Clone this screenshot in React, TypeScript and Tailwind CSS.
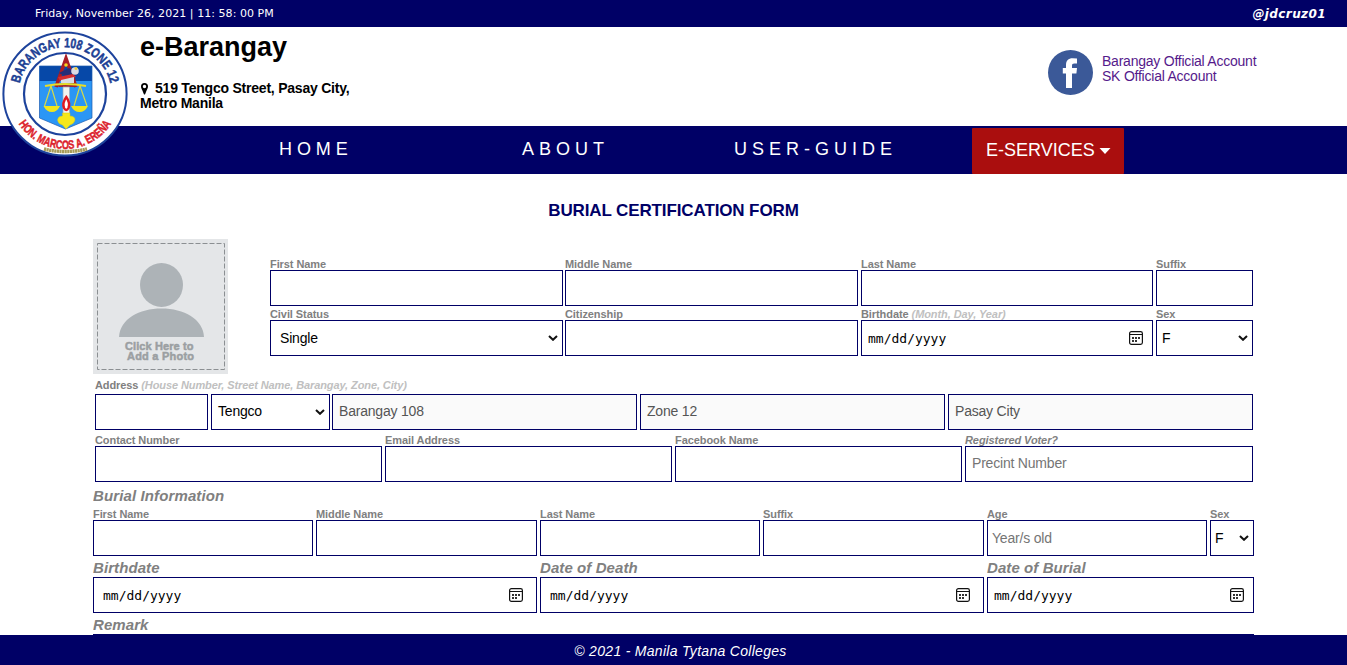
import type { ReactNode } from "react";

function Seal() {
  return (
    <svg viewBox="0 0 126 126" className="block h-[126px] w-[126px]">
      <defs>
        <path id="seal-top" d="M16.4 63 A46.6 46.6 0 0 1 109.6 63" />
        <path id="seal-bottom" d="M8 63 A55 55 0 0 0 118 63" />
      </defs>
      <circle cx="63" cy="63" r="61.6" fill="#fff" stroke="#1d439c" strokeWidth="2" />
      <circle cx="63" cy="63" r="41" fill="#fff" stroke="#1d439c" strokeWidth="2.2" />
      <path d="M37.500 35 H90 V87 L63.500 98 L37.500 87 Z" fill="#2b96f5" />
      <path d="M37.500 35 H90 V50 H37.500 Z" fill="#0648a8" />
      <path d="M37.500 35 H90 V87 L63.500 98 L37.500 87 Z" fill="none" stroke="#1c5bb0" strokeWidth="0.7" />
      <path d="M54 56 L64 27.500 L74 56" fill="none" stroke="#a91d27" strokeWidth="3.600" />
      <circle cx="64" cy="34" r="1.800" fill="#f5d51d" />
      <path d="M57 42 L67 37 L76 44 L64 46 Z" fill="#252e78" />
      <path d="M56 46 L71 43 L74 46 L58 50 Z" fill="#d52c2e" />
      <path d="M59 49 L72 46 V52 H59 Z" fill="#d8dbe5" />
      <circle cx="73" cy="40" r="3.8" fill="#d8dbe5" />
      <circle cx="74" cy="37.5" r="1.5" fill="#eccb40" />
      <path d="M54 54 L74 52 L72 56 H57 Z" fill="#9e2430" />
      <path d="M43 55 Q63 51 84 55" fill="none" stroke="#e9dc26" strokeWidth="1.8" />
      <path d="M49 55 L42.500 75 M49 55 L55 75 M78 55 L72 75 M78 55 L85 75" stroke="#d3d94b" strokeWidth="1.2" />
      <path d="M41.500 75 H58 Q55 81 50 81 Q44.500 81 41.500 75 Z M69 75 H86 Q83 81 77.500 81 Q72 81 69 75 Z" fill="#f1e51c" />
      <path d="M61 56 H67.500 V83 H61 Z" fill="#f2f3ee" stroke="#9caab8" strokeWidth="0.7" />
      <path d="M64.300 66 Q68.500 72 66.500 77 Q64.300 81 62 77 Q60 72 64.300 66 Z" fill="#fff" stroke="#e01820" strokeWidth="2.4" />
      <path d="M60.500 82 H68 V85 Q73 85 73 89 Q72 93 68 94 L64 98 L60.500 94 Q56 93 55.500 89 Q56 85 60.500 85 Z" fill="#f5e71b" stroke="#d3c818" strokeWidth="0.5" />
      <text fill="#1c3f94" stroke="#1c3f94" strokeWidth="0.5" fontFamily="Liberation Sans, sans-serif" fontWeight="700" fontSize="13.500">
        <textPath href="#seal-top" startOffset="50%" textAnchor="middle" textLength="125" lengthAdjust="spacingAndGlyphs">BARANGAY 108 ZONE 12</textPath>
      </text>
      <text fill="#dc1f2c" stroke="#dc1f2c" strokeWidth="0.5" fontFamily="Liberation Sans, sans-serif" fontWeight="700" fontSize="12">
        <textPath href="#seal-bottom" startOffset="50%" textAnchor="middle" textLength="110" lengthAdjust="spacingAndGlyphs">HON. MARCOS A. EREÑA</textPath>
      </text>
      <path d="M42 118 Q63 123 85 118" fill="none" stroke="#a79b58" strokeWidth="3.400" strokeDasharray="2.200 0.400" />
    </svg>
  );
}

function CalendarIcon() {
  return (
    <svg viewBox="0 0 14 14" className="-mt-[1px] block h-[14px] w-[14px]">
      <rect x="0.6" y="0.6" width="12.8" height="12.8" rx="1.800" fill="none" stroke="#111" strokeWidth="1.2" />
      <path d="M1 3.500 H13" stroke="#111" />
      <path d="M6 6h2v2h-2z M9 6h2v2h-2z M3 6h2v2h-2z M3 9h2v2h-2z M6 9h2v2h-2z" fill="#333" />
    </svg>
  );
}

function Chevron() {
  return (
    <svg viewBox="0 0 10 6" className="block h-[6px] w-[10px]">
      <path d="M1 1 L5 4.800 L9 1" fill="none" stroke="#111" strokeWidth="2" />
    </svg>
  );
}

function Avatar() {
  return (
    <svg viewBox="0 0 135 135" className="block h-[135px] w-[135px]">
      <rect width="135" height="135" fill="#e4e6e8" />
      <rect x="4.500" y="4.500" width="127" height="126" fill="none" stroke="#8b8f92" strokeDasharray="5 2" />
      <ellipse cx="68.500" cy="46" rx="21.500" ry="22" fill="#adb3b7" />
      <path d="M26 98 C27 80 46 69.500 68.500 69.500 C91 69.500 110 80 111 98 Z" fill="#adb3b7" />
      <g fill="#9b9fa2" stroke="#9b9fa2" strokeWidth="0.5" fontFamily="Liberation Sans, sans-serif" fontWeight="700" fontSize="11">
        <text x="32" y="111" textLength="68.500">Click Here to</text>
        <text x="34" y="121" textLength="67">Add a Photo</text>
      </g>
    </svg>
  );
}

type FieldProps = {
  label?: string;
  hint?: string;
  italic?: boolean;
  gap?: "pr-0" | "pr-[2px]" | "pr-[3px]";
  pad?: string;
  tone?: string;
  value?: string;
  kind?: "text" | "select" | "date";
  end?: string;
  big?: boolean;
};

function Field({ label, hint, italic, gap = "pr-[3px]", pad = "pl-[6px]", tone = "text-black", value, kind = "text", end = "pr-[5px]", big }: FieldProps) {
  return (
    <div className={`flex flex-col ${gap}`}>
      {label && (
        <label
          className={
            big
              ? "h-[21px] text-[15px] leading-[23px] font-bold tracking-[0.08px] italic text-[#808080]"
              : `h-[14px] text-[11px] leading-[16px] font-bold tracking-[-0.08px] whitespace-nowrap text-[#808080] ${italic ? "italic" : ""}`
          }
        >
          {label}
          {hint && <i className="text-[#c0c0c0]"> {hint}</i>}
        </label>
      )}
      <div
        className={`flex h-9 items-center justify-between border border-[#000066] ${pad} ${end} ${tone} ${
          kind === "date" ? "font-['DejaVu_Sans_Mono',monospace] text-[13px]" : "text-[14px] tracking-[-0.2px]"
        }`}
      >
        <span className={`whitespace-nowrap ${kind === "text" ? "-mt-[2px]" : kind === "date" ? "mt-[1px]" : ""}`}>{value}</span>
        {kind === "select" && <Chevron />}
        {kind === "date" && <CalendarIcon />}
      </div>
    </div>
  );
}

function Heading({ children }: { children: ReactNode }) {
  return <h3 className="text-[15px] font-bold tracking-[0.12px] italic text-[#808080]">{children}</h3>;
}

export default function App() {
  return (
    <div className="flex h-[665px] w-[1347px] flex-col overflow-hidden bg-white font-['Liberation_Sans',Arial,sans-serif] text-black">
      <div className="flex h-[27px] shrink-0 justify-between bg-[#000066] pr-[21px] pl-[35px] font-['DejaVu_Sans',Verdana,sans-serif] text-white">
        <span className="text-[11px] leading-[27px] tracking-[0.05px]">Friday, November 26, 2021 | 11: 58: 00 PM</span>
        <span className="text-[12px] leading-[29px] font-bold tracking-[0.4px] italic">@jdcruz01</span>
      </div>

      <header className="relative flex h-[99px] shrink-0">
        <div className="absolute top-[4px] left-[2px] z-10">
          <Seal />
        </div>
        <div className="ml-[140px] w-[230px]">
          <h1 className="mt-[4px] text-[27px] leading-[32px] font-bold">e-Barangay</h1>
          <p className="mt-[18px] text-[14px] leading-[15px] font-bold tracking-[-0.22px] whitespace-nowrap">
            <svg viewBox="0 0 7 12" className="mr-[7px] ml-[1px] inline h-[12px] w-[7px] align-[-2px]">
              <path
                fillRule="evenodd"
                d="M3.500 0 A3.500 3.500 0 0 1 7 3.500 C7 5 6.200 6 5.600 7.400 L4.100 11.200 Q3.500 12 2.900 11.200 L1.400 7.400 C0.800 6 0 5 0 3.500 A3.500 3.500 0 0 1 3.500 0 Z M3.500 1.800 A1.700 1.700 0 1 0 3.500 5.200 A1.700 1.700 0 1 0 3.500 1.800 Z"
              />
            </svg>
            519 Tengco Street, Pasay City,
            <br />
            Metro Manila
          </p>
        </div>
        <div className="mt-[23px] ml-[678px] flex">
          <svg viewBox="0 0 45 45" className="block h-[45px] w-[45px]">
            <circle cx="22.500" cy="22.500" r="22.500" fill="#3b5998" />
            <path
              d="M18 38 V23.500 H14.800 V18 H18 V15.200 C18 10.500 20.300 8.300 24.600 8.300 L29 8.500 V13.500 H26.300 C24.600 13.500 24 14.300 24 15.800 V18 H29 L28.400 23.500 H24 V38 Z"
              fill="#fff"
            />
          </svg>
          <div className="mt-[4px] ml-[9px] text-[14px] leading-[15px] tracking-[-0.23px] whitespace-nowrap text-[#551a8b]">
            Barangay Official Account
            <br />
            SK Official Account
          </div>
        </div>
      </header>

      <nav className="flex h-[48px] shrink-0 bg-[#000066] text-[18px] leading-[46px] text-white">
        <span className="ml-[279px] w-[243px] tracking-[4.9px]">HOME</span>
        <span className="w-[212px] tracking-[5px]">ABOUT</span>
        <span className="w-[238px] tracking-[5px]">USER-GUIDE</span>
        <span className="mt-[2px] flex h-[46px] w-[152px] items-center rounded-[1px] bg-[#aa0e0e] pb-[2px] pl-[14px] text-[18px] leading-[44px]">
          E-SERVICES
          <svg viewBox="0 0 12 6" className="mt-[2px] ml-[4px] block h-[6px] w-[12px]">
            <path d="M0.500 0 H11.500 L6 6 Z" fill="#fff" />
          </svg>
        </span>
      </nav>

      <main className="ml-[93px] flex w-[1161px] grow flex-col overflow-hidden">
        <h2 className="mt-[27px] text-center text-[17px] leading-[20px] font-bold tracking-[-0.12px] text-[#000066]">BURIAL CERTIFICATION FORM</h2>
        <div className="mt-[18px] flex h-[139px] shrink-0">
          <Avatar />
          <div className="mt-[17px] ml-[42px]">
            <div className="grid grid-cols-[295px_296px_295px_97px]">
              <Field label="First Name" gap="pr-[2px]" />
              <Field label="Middle Name" />
              <Field label="Last Name" />
              <Field label="Suffix" gap="pr-0" />
            </div>
            <div className="grid grid-cols-[295px_296px_295px_97px]">
              <Field label="Civil Status" gap="pr-[2px]" kind="select" value="Single" pad="pl-[9px]" end="pr-[4px]" />
              <Field label="Citizenship" />
              <Field label="Birthdate" hint="(Month, Day, Year)" kind="date" value="mm/dd/yyyy" end="pr-[9px]" />
              <Field label="Sex" gap="pr-0" kind="select" value="F" pad="pl-[5px]" end="pr-[4px]" />
            </div>
          </div>
        </div>

        <div className="ml-[2px]">
          <p className="h-[16px] text-[11px] leading-[15px] font-bold tracking-[-0.1px] text-[#808080]">
            Address <i className="text-[#c0c0c0]">(House Number, Street Name, Barangay, Zone, City)</i>
          </p>
          <div className="grid grid-cols-[116px_121px_308px_308px_305px]">
            <Field />
            <Field gap="pr-[2px]" kind="select" value="Tengco" end="pr-[4px] pb-[1px]" />
            <Field value="Barangay 108" tone="bg-[#fafafa] text-[#555]" />
            <Field value="Zone 12" tone="bg-[#fafafa] text-[#555]" />
            <Field value="Pasay City" tone="bg-[#fafafa] text-[#555]" gap="pr-0" />
          </div>
          <div className="mt-[2px] grid grid-cols-[290px_290px_290px_288px]">
            <Field label="Contact Number" />
            <Field label="Email Address" />
            <Field label="Facebook Name" />
            <Field label="Registered Voter?" italic value="Precint Number" tone="text-[#757575]" gap="pr-0" />
          </div>
        </div>

        <div className="h-[24px] shrink-0 leading-[27px]">
          <Heading>Burial Information</Heading>
        </div>
        <div className="grid grid-cols-[223px_224px_223px_224px_223px_44px]">
          <Field label="First Name" />
          <Field label="Middle Name" />
          <Field label="Last Name" />
          <Field label="Suffix" />
          <Field label="Age" value="Year/s old" tone="text-[#757575]" pad="pl-[4px] pt-[2px]" />
          <Field label="Sex" kind="select" value="F" pad="pl-[4px]" end="pr-[4px]" gap="pr-0" />
        </div>
        <div className="grid grid-cols-[447px_447px_267px]">
          <Field big label="Birthdate" kind="date" value="mm/dd/yyyy" pad="pl-[9px]" end="pr-[13px]" />
          <Field big label="Date of Death" kind="date" value="mm/dd/yyyy" pad="pl-[9px]" end="pr-[13px]" />
          <Field big label="Date of Burial" kind="date" value="mm/dd/yyyy" end="pr-[9px]" gap="pr-0" />
        </div>
        <Field big label="Remark" gap="pr-0" />
      </main>

      <footer className="h-[30px] shrink-0 bg-[#000066] text-center text-[14px] leading-[32px] tracking-[0.3px] text-white italic">
        <span className="ml-[14px]">© 2021 - Manila Tytana Colleges</span>
      </footer>
    </div>
  );
}
